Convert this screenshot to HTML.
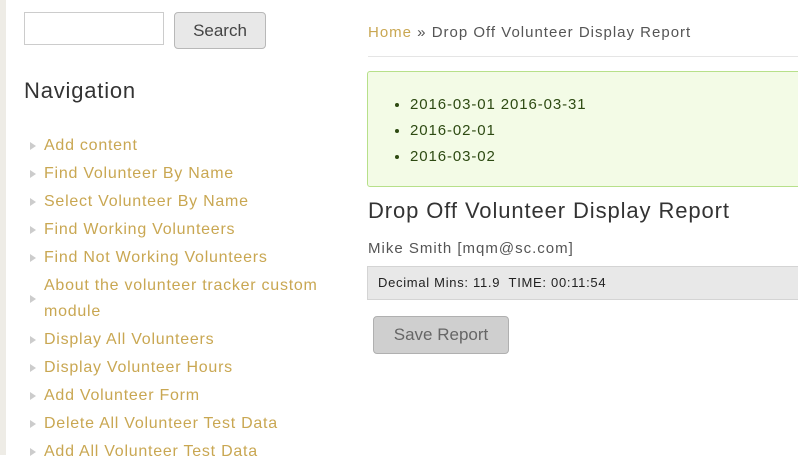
<!DOCTYPE html>
<html><head><style>
body{margin:0;width:798px;height:455px;overflow:hidden;background:#fff;font-family:"Liberation Sans",sans-serif;position:relative}
.strip{position:absolute;left:0;top:0;width:6px;height:455px;background:#eeece6}
.inp{position:absolute;left:24px;top:12px;width:140px;height:33px;border:1px solid #ccc;box-sizing:border-box}
.btn{position:absolute;left:174px;top:12px;width:92px;height:37px;border:1px solid #b8b8b8;border-radius:4px;background:#e8e8e8;box-sizing:border-box;font-size:17px;color:#444;text-align:center;line-height:35px}
h2{position:absolute;left:24px;top:78px;margin:0;font-weight:normal;font-size:22px;color:#333;letter-spacing:0.8px}
.nav{position:absolute;left:30px;top:133px;margin:0;padding:0;list-style:none;width:300px;letter-spacing:0.75px}
.nav li{position:relative;padding-left:14px;color:#c9a752;font-size:16px;line-height:26px;margin-bottom:2px}
.nav li:before{content:"";position:absolute;left:0;top:50%;margin-top:-4px;width:0;height:0;border-left:6px solid #ccc;border-top:4px solid transparent;border-bottom:4px solid transparent}
.bc{position:absolute;left:368px;top:24px;font-size:15px;color:#555;letter-spacing:1px}
.bc span{color:#c9a752}
.hr{position:absolute;left:368px;top:56px;width:430px;height:1px;background:#e5e5e5}
.msg{position:absolute;left:367px;top:71px;width:440px;height:116px;border:1px solid #b7e08a;border-radius:3px;background:#f3fbe6;box-sizing:border-box}
.msg ul{margin:0;padding:0 0 0 42px;position:absolute;top:20px;color:#2d4a12;font-size:15px;line-height:26px;letter-spacing:0.9px}
h1{position:absolute;left:368px;top:198px;margin:0;font-weight:normal;font-size:22px;color:#333;letter-spacing:0.9px}
.ms{position:absolute;left:368px;top:240px;font-size:15px;color:#555;letter-spacing:1px}
.dm{position:absolute;left:367px;top:266px;width:440px;height:34px;border:1px solid #d4d4d4;background:#e8e8e8;box-sizing:border-box;font-size:13px;color:#222;line-height:32px;padding-left:10px;letter-spacing:0.7px}
.sv{position:absolute;left:373px;top:316px;width:136px;height:38px;border:1px solid #b0b0b0;border-radius:4px;background:#cfcfcf;box-sizing:border-box;font-size:17px;color:#666;text-align:center;line-height:36px}
</style></head><body>
<div class="strip"></div>
<div class="inp"></div><div class="btn">Search</div>
<h2>Navigation</h2>
<ul class="nav">
<li>Add content</li><li>Find Volunteer By Name</li><li>Select Volunteer By Name</li><li>Find Working Volunteers</li><li>Find Not Working Volunteers</li><li>About the volunteer tracker custom module</li><li>Display All Volunteers</li><li>Display Volunteer Hours</li><li>Add Volunteer Form</li><li>Delete All Volunteer Test Data</li><li>Add All Volunteer Test Data</li>
</ul>
<div class="bc"><span>Home</span> » Drop Off Volunteer Display Report</div>
<div class="hr"></div>
<div class="msg"><ul><li>2016-03-01 2016-03-31</li><li>2016-02-01</li><li>2016-03-02</li></ul></div>
<h1>Drop Off Volunteer Display Report</h1>
<div class="ms">Mike Smith [mqm@sc.com]</div>
<div class="dm">Decimal Mins: 11.9&nbsp; TIME: 00:11:54</div>
<div class="sv">Save Report</div>
</body></html>
